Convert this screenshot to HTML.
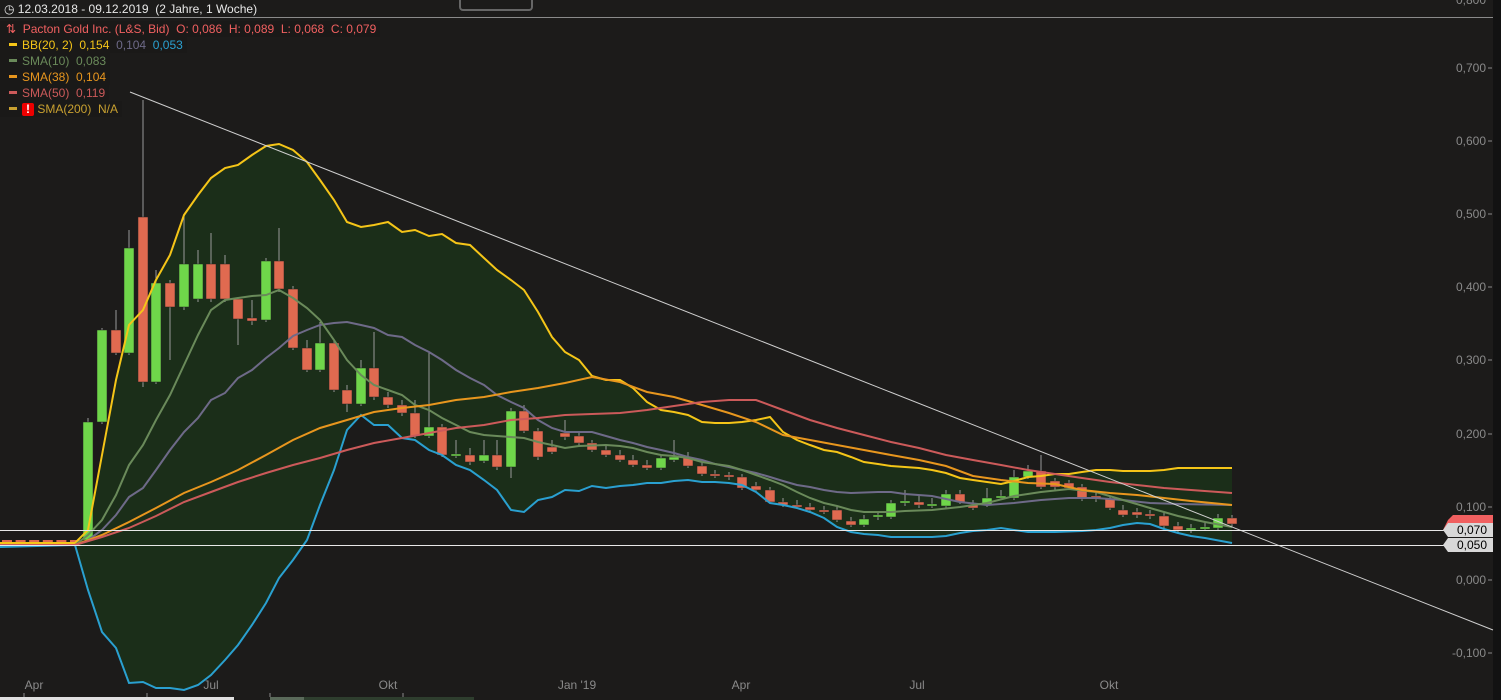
<!DOCTYPE html>
<html><head><meta charset="utf-8"><style>
html,body{margin:0;padding:0;background:#1c1b1a;width:1501px;height:700px;overflow:hidden;font-family:"Liberation Sans",sans-serif}
#c{position:absolute;left:0;top:0}
.lg{position:absolute;left:0;font-size:12px;height:16px;line-height:16px;background:#1a1918;padding-right:4px}
.sw{display:inline-block;width:8px;height:3px;vertical-align:middle;margin:0 5px 2px 9px}
</style></head><body>
<svg id="c" width="1501" height="700" xmlns="http://www.w3.org/2000/svg">
<rect x="1493" y="0" width="8" height="700" fill="#121212"/>
<line x1="0" y1="17.5" x2="1493" y2="17.5" stroke="#8a8a8a"/>
<rect x="460" y="-4" width="72" height="14" rx="3" fill="none" stroke="#666" stroke-width="2"/>
<path id="fill" fill="#1b2e19"/>
<g id="cand"></g>
<polyline id="up" fill="none" stroke="#f5c518" stroke-width="2"/>
<polyline id="lo" fill="none" stroke="#2aa0d0" stroke-width="2"/>
<polyline id="mid" fill="none" stroke="#6e6a88" stroke-width="2"/>
<polyline id="s10" fill="none" stroke="#6a8a5a" stroke-width="2"/>
<polyline id="s38" fill="none" stroke="#e8961e" stroke-width="2"/>
<polyline id="s50" fill="none" stroke="#cc5a5a" stroke-width="2"/>
<line x1="130" y1="92" x2="1493" y2="630" stroke="#cfcfcf" stroke-width="1"/>
<line x1="0" y1="530.5" x2="1445" y2="530.5" stroke="#e8e8e8"/>
<line x1="0" y1="545.5" x2="1445" y2="545.5" stroke="#e8e8e8"/>
<g font-size="12" fill="#8a8a8a" text-anchor="end">
<text x="1486" y="4">0,800</text>
<text x="1486" y="72">0,700</text>
<text x="1486" y="145">0,600</text>
<text x="1486" y="218">0,500</text>
<text x="1486" y="291">0,400</text>
<text x="1486" y="364">0,300</text>
<text x="1486" y="438">0,200</text>
<text x="1486" y="511">0,100</text>
<text x="1486" y="584">0,000</text>
<text x="1486" y="657">-0,100</text>
</g>
<g stroke="#8a8a8a"><line x1="1488" y1="68" x2="1492" y2="68"/><line x1="1488" y1="141" x2="1492" y2="141"/><line x1="1488" y1="214" x2="1492" y2="214"/><line x1="1488" y1="287" x2="1492" y2="287"/><line x1="1488" y1="360" x2="1492" y2="360"/><line x1="1488" y1="434" x2="1492" y2="434"/><line x1="1488" y1="507" x2="1492" y2="507"/><line x1="1488" y1="580" x2="1492" y2="580"/><line x1="1488" y1="653" x2="1492" y2="653"/></g>
<polygon points="1448,520 1453,515 1493,515 1493,530 1443,530" fill="#f06060"/>
<polygon points="1443,530 1448,523 1493,523 1493,537 1448,537" fill="#d8d8d8"/>
<polygon points="1443,545 1448,538 1493,538 1493,552 1448,552" fill="#d8d8d8"/>
<text x="1457" y="534" font-size="12" fill="#000">0,070</text>
<text x="1457" y="549" font-size="12" fill="#000">0,050</text>
<g font-size="12" fill="#8a8a8a" text-anchor="middle">
<text x="34" y="689">Apr</text><text x="211" y="689">Jul</text><text x="388" y="689">Okt</text><text x="577" y="689">Jan '19</text><text x="741" y="689">Apr</text><text x="917" y="689">Jul</text><text x="1109" y="689">Okt</text>
</g>
<g stroke="#8a8a8a"><line x1="24" y1="693" x2="24" y2="697"/><line x1="147" y1="693" x2="147" y2="697"/><line x1="270" y1="693" x2="270" y2="697"/><line x1="403" y1="693" x2="403" y2="697"/></g>
<rect x="0" y="697" width="234" height="3" fill="#e0e0e0"/>
<rect x="270" y="697" width="34" height="3" fill="#5a6a5a"/>
<rect x="304" y="697" width="170" height="3" fill="#2e3e2e"/>
</svg>
<div style="position:absolute;left:4px;top:2px;font-size:12px;color:#e8e8e8">&#9719; 12.03.2018 - 09.12.2019 &nbsp;(2 Jahre, 1 Woche)</div>
<div class="lg" style="top:21px;color:#f06060;padding-left:6px">&#8645;&nbsp; Pacton Gold Inc. (L&amp;S, Bid) &nbsp;O: 0,086 &nbsp;H: 0,089 &nbsp;L: 0,068 &nbsp;C: 0,079</div>
<div class="lg" style="top:37px;color:#f5c518"><span class="sw" style="background:#f5c518"></span>BB(20, 2) &nbsp;0,154 &nbsp;<span style="color:#6e6a88">0,104</span> &nbsp;<span style="color:#2aa0d0">0,053</span></div>
<div class="lg" style="top:53px;color:#6a8a5a"><span class="sw" style="background:#6a8a5a"></span>SMA(10) &nbsp;0,083</div>
<div class="lg" style="top:69px;color:#e8961e"><span class="sw" style="background:#e8961e"></span>SMA(38) &nbsp;0,104</div>
<div class="lg" style="top:85px;color:#cc5a5a"><span class="sw" style="background:#cc5a5a"></span>SMA(50) &nbsp;0,119</div>
<div class="lg" style="top:101px;color:#c8a030"><span class="sw" style="background:#c8a030"></span><span style="display:inline-block;width:12px;height:13px;background:#e00;color:#fff;border-radius:2px;text-align:center;font-weight:bold;line-height:13px;vertical-align:middle">!</span> SMA(200) &nbsp;N/A</div>
<script>
var up="0,543 75,543 88,530 102,455 116,380 129,325 143,310 156,280 170,255 184,215 198,195 211,178 225,168 238,165 252,155 266,146 279,144 293,150 307,162 320,180 334,200 347,222 361,227 374,225 388,222 402,232 415,230 429,236 442,234 456,243 470,245 484,258 497,270 511,280 524,290 538,312 552,337 565,352 579,360 592,376 606,380 620,380 633,388 647,402 661,410 674,412 688,415 702,422 715,423 729,423 742,422 756,420 770,417 783,432 797,440 810,445 824,450 837,452 851,457 864,462 878,464 891,466 905,467 919,468 932,470 946,473 960,478 973,480 987,482 1001,484 1014,481 1028,477 1041,476 1055,474 1069,474 1082,472 1096,470 1110,470 1123,471 1137,471 1150,471 1164,470 1178,468 1191,468 1205,468 1232,468";
var lo="0,547 75,545 88,590 102,632 116,648 129,683 143,682 156,688 170,688 184,690 198,685 211,675 225,660 238,645 252,625 266,603 279,578 293,560 307,540 320,505 334,470 347,430 361,415 374,425 388,425 402,438 415,440 429,450 442,455 456,465 470,470 484,480 497,490 511,510 524,512 538,500 552,497 565,490 579,491 592,486 606,488 620,486 633,485 647,483 661,483 674,481 688,480 702,482 715,482 729,483 742,485 756,492 770,503 783,505 797,508 810,512 824,518 837,527 851,532 864,534 878,535 891,537 905,537 932,537 946,536 960,533 973,531 987,530 1001,528 1014,530 1028,532 1055,532 1082,531 1096,530 1110,528 1123,525 1137,523 1150,524 1164,529 1178,533 1191,536 1205,538 1232,543";
var mid="0,545 75,545 88,540 102,530 116,515 129,497 143,488 156,470 170,450 184,432 198,418 211,400 225,393 238,378 252,370 266,358 279,348 293,336 307,330 320,325 334,323 347,322 361,325 374,328 388,335 402,337 415,345 429,352 442,360 456,370 470,378 484,385 497,395 511,402 524,408 538,420 552,428 565,432 592,432 606,436 620,440 633,443 647,447 661,450 674,453 688,457 702,460 715,464 729,467 742,470 756,473 770,477 783,481 797,485 810,487 824,490 837,492 851,493 878,492 891,492 905,494 932,496 960,502 987,505 1014,503 1041,500 1069,498 1096,498 1123,500 1150,503 1178,504 1232,505";
var s10="0,545 75,545 88,535 102,520 116,495 129,465 143,445 156,420 170,395 184,365 198,335 211,310 225,300 238,298 252,296 266,295 279,290 293,298 307,308 320,320 334,340 347,360 361,375 374,385 388,390 402,395 415,405 429,410 442,418 456,425 470,432 484,435 497,436 524,438 538,442 552,445 565,448 579,446 606,445 620,446 633,448 647,452 661,455 674,456 688,458 702,462 715,464 729,466 742,470 756,475 770,480 783,485 797,492 810,498 824,503 837,506 851,510 864,512 891,512 905,511 932,510 960,507 987,503 1014,496 1041,492 1069,489 1096,492 1123,500 1150,508 1178,516 1205,522 1232,527";
var s38="0,545 75,545 102,535 129,522 156,508 184,493 211,482 238,470 266,455 293,440 320,428 347,420 374,412 402,408 429,405 456,400 484,397 511,392 538,388 565,383 592,377 620,382 647,392 674,397 702,405 729,413 756,422 783,435 810,440 837,445 864,450 891,455 919,460 946,466 973,476 1001,480 1028,483 1055,484 1082,490 1110,493 1137,495 1164,498 1191,501 1232,505";
var s50="0,545 75,545 102,537 129,528 156,516 184,502 211,492 238,482 266,473 293,465 320,458 347,450 374,443 402,438 429,433 456,428 484,425 511,420 538,418 565,415 592,414 620,413 647,410 674,406 702,402 729,400 756,400 783,410 810,420 837,428 864,435 891,442 919,448 946,455 973,460 1001,465 1028,470 1055,474 1082,478 1110,482 1137,485 1164,488 1191,490 1232,493";
function s(id,p){document.getElementById(id).setAttribute("points",p);}
s("up",up);s("lo",lo);s("mid",mid);s("s10",s10);s("s38",s38);s("s50",s50);
var lr=lo.split(" ").reverse().join(" L");
document.getElementById("fill").setAttribute("d","M"+up.split(" ").join(" L")+" L"+lr+" Z");
// x, top, bottom, green?, wickTop, wickBot
var C=[[88,422,540,1,418,541],[102,330,422,1,328,424],[116,330,353,0,310,355],[129,248,353,1,230,355],[143,217,382,0,100,387],[156,283,382,1,270,384],[170,283,307,0,280,360],[184,264,307,1,215,310],[198,264,299,1,250,302],[211,264,299,0,233,302],[225,264,299,0,255,302],[238,299,319,0,297,345],[252,318,321,0,300,325],[266,261,320,1,258,322],[279,261,289,0,228,292],[293,289,348,0,286,350],[307,348,370,0,340,372],[320,343,370,1,322,372],[334,343,390,0,340,392],[347,390,404,0,385,412],[361,368,404,1,360,406],[374,368,397,0,332,400],[388,397,405,0,392,408],[402,405,413,0,400,416],[415,413,436,0,400,438],[429,427,436,1,352,438],[442,427,455,0,424,457],[456,454,456,1,440,458],[470,455,462,0,448,465],[484,455,461,1,440,463],[497,455,467,0,440,470],[511,411,467,1,408,478],[524,411,431,0,405,433],[538,431,457,0,428,460],[552,447,452,0,440,454],[565,433,437,0,420,440],[579,436,443,0,432,446],[592,443,450,0,440,452],[606,450,455,0,446,457],[620,455,460,0,450,462],[633,460,465,0,455,467],[647,465,468,0,460,470],[661,458,468,1,455,470],[674,457,460,1,440,462],[688,457,466,0,452,468],[702,466,474,0,462,476],[715,474,476,0,470,478],[729,475,477,0,472,480],[742,477,488,0,474,490],[756,486,490,0,482,492],[770,490,502,0,487,504],[783,502,505,0,498,507],[797,505,507,0,500,509],[810,507,510,0,503,512],[824,510,511,0,506,514],[837,510,520,0,505,522],[851,521,525,0,517,527],[864,519,525,1,515,527],[878,515,517,1,512,520],[891,503,517,1,500,519],[905,501,503,1,490,506],[919,502,505,0,495,508],[932,504,506,1,498,508],[946,494,506,1,490,508],[960,494,502,0,490,504],[973,505,508,0,500,510],[987,498,505,1,488,507],[1001,496,498,1,490,500],[1014,477,498,1,470,500],[1028,471,477,1,465,479],[1041,471,487,0,455,489],[1055,481,487,0,478,490],[1069,483,488,0,480,490],[1082,487,499,0,484,501],[1096,496,499,0,492,502],[1110,499,508,0,496,510],[1123,510,515,0,505,517],[1137,512,515,0,508,518],[1150,514,516,0,510,519],[1164,516,526,0,512,530],[1178,526,530,0,522,533],[1191,528,530,1,524,533],[1205,527,529,1,522,531],[1218,518,528,1,514,530],[1232,518,524,0,515,527]];
var g="";
for(var x=7;x<80;x+=13.6){g+='<rect x="'+(x-5)+'" y="540" width="10" height="2" fill="#e06a50"/>';}
C.forEach(function(c){var col=c[3]?"#6fd64a":"#e06a50";g+='<line x1="'+c[0]+'" y1="'+c[4]+'" x2="'+c[0]+'" y2="'+c[5]+'" stroke="#999"/><rect x="'+(c[0]-5)+'" y="'+c[1]+'" width="10" height="'+Math.max(2,c[2]-c[1])+'" fill="'+col+'" stroke="#222" stroke-width="0.5"/>';});
document.getElementById("cand").innerHTML=g;
</script>
</body></html>
